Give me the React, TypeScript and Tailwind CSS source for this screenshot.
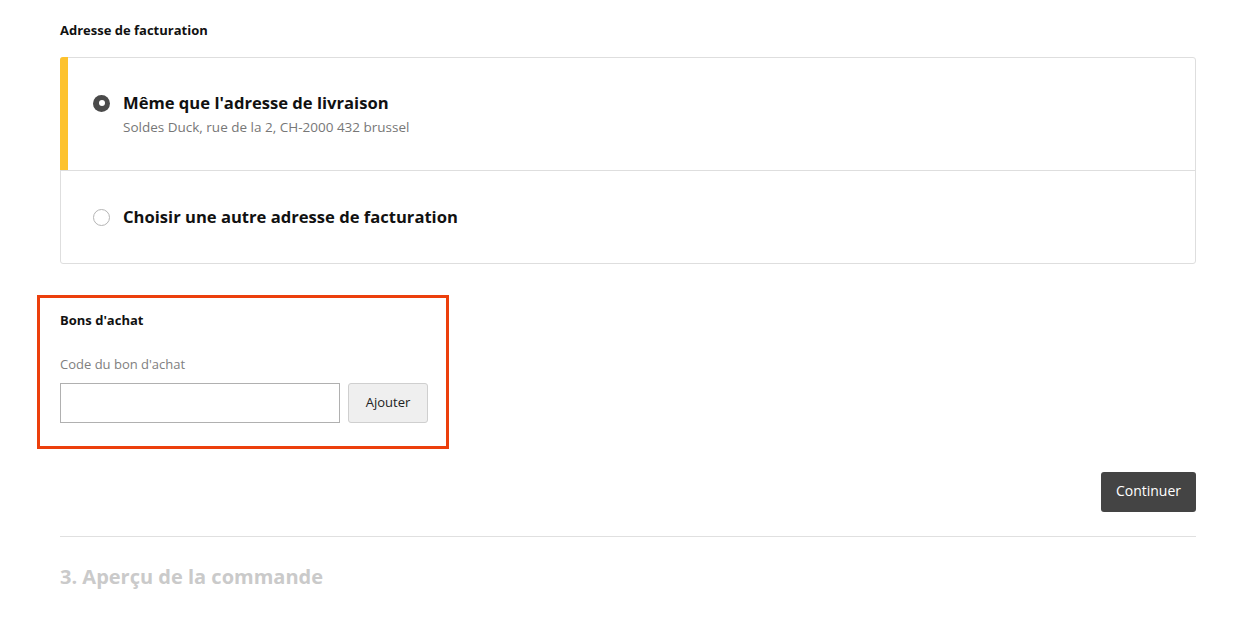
import React from 'react';

const font = { fontFamily: '"Open Sans", "Noto Sans", sans-serif' };

const Radio: React.FC<{ checked?: boolean }> = ({ checked }) =>
  checked ? (
    <span className="w-[17px] h-[17px] rounded-full bg-[#4a4a4a] flex items-center justify-center shrink-0">
      <span className="w-[6px] h-[6px] rounded-full bg-white" />
    </span>
  ) : (
    <span className="w-[17px] h-[17px] rounded-full border border-[#b5b5b5] bg-white shrink-0" />
  );

const App: React.FC = () => {
  return (
    <div className="bg-white min-h-screen text-[#111]" style={font}>
      <div className="w-[1136px] ml-[60px] pt-[22px]">
        {/* Billing address */}
        <h2 className="text-[13px] font-bold leading-[16px]">Adresse de facturation</h2>

        <div className="mt-[19px] border border-[#dedede] rounded-[3px]">
          <div className="relative flex flex-col pl-[32px] pt-[34px] h-[113px] border-b border-[#dedede]">
            <div className="absolute left-[-1px] top-[-1px] bottom-0 w-[8px] bg-[#fdc22d] rounded-tl-[3px]" />
            <div className="flex items-center gap-[13px]">
              <Radio checked />
              <span className="text-[16.6px] font-bold leading-[22px]">Même que l'adresse de livraison</span>
            </div>
            <span className="ml-[30px] mt-[5px] text-[13.5px] text-[#777] leading-[17px]">
              Soldes Duck, rue de la 2, CH-2000 432 brussel
            </span>
          </div>
          <div className="flex items-center gap-[13px] pl-[32px] h-[92px]">
            <Radio />
            <span className="text-[16.6px] font-bold leading-[22px]">Choisir une autre adresse de facturation</span>
          </div>
        </div>

        {/* Vouchers */}
        <div className="mt-[31px] ml-[-23px] w-[412px] h-[154px] border-[3px] border-[#ec3f0c] pl-[20px] pt-[14px]">
          <h3 className="text-[13px] font-bold leading-[16px]">Bons d'achat</h3>
          <label className="block mt-[28px] text-[13px] text-[#808080] leading-[16px]">Code du bon d'achat</label>
          <div className="flex gap-[8px] mt-[11px]">
            <input className="w-[280px] h-[40px] border border-[#b0b0b0] outline-none px-2 text-sm" />
            <button className="w-[80px] h-[40px] bg-[#efefef] border border-[#cfcfcf] rounded-[3px] text-[13px] text-[#222]">
              Ajouter
            </button>
          </div>
        </div>

        <div className="flex justify-end mt-[23px]">
          <button className="w-[95px] h-[40px] bg-[#444] rounded-[3px] text-white text-[14px] leading-[18px] pb-[2px]">
            Continuer
          </button>
        </div>

        <div className="mt-[24px] border-t border-[#e0e0e0]" />

        <h2 className="mt-[27px] text-[20px] font-bold text-[#cacaca] leading-[26px]">3. Aperçu de la commande</h2>
      </div>
    </div>
  );
};

export default App;
